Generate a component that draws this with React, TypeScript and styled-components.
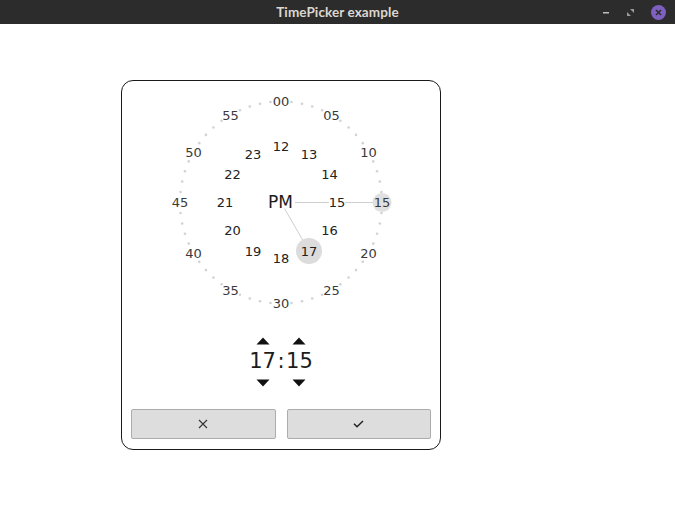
import React from "react";
import styled, { createGlobalStyle } from "styled-components";

const GlobalStyle = createGlobalStyle`
  html, body {
    margin: 0;
    padding: 0;
    background: #ffffff;
    font-family: "DejaVu Sans", "Liberation Sans", sans-serif;
  }
`;

const Window = styled.div`
  width: 675px;
  height: 506px;
  display: flex;
  flex-direction: column;
  background: #ffffff;
  overflow: hidden;
`;

const TitleBar = styled.div`
  height: 24px;
  flex: 0 0 24px;
  background: #2c2c2c;
  display: grid;
  grid-template-columns: 1fr auto 1fr;
  align-items: center;
`;

const Title = styled.div`
  grid-column: 2;
  color: #dcd8d0;
  font-family: "Lato", "Open Sans", sans-serif;
  font-weight: 700;
  font-size: 13.5px;
  letter-spacing: 0.1px;
`;

const Controls = styled.div`
  grid-column: 3;
  justify-self: end;
  display: flex;
  align-items: center;
  gap: 16px;
  padding-right: 9px;
`;

const CloseDot = styled.div`
  width: 15px;
  height: 15px;
  border-radius: 50%;
  background: #7d60bf;
  display: flex;
  align-items: center;
  justify-content: center;
`;

const Content = styled.div`
  flex: 1;
  padding: 56px 0 0 121px;
`;

const Card = styled.div`
  width: 320px;
  box-sizing: border-box;
  border: 1px solid #1a1a1a;
  border-radius: 12px;
  display: flex;
  flex-direction: column;
  background: #ffffff;
`;

const ClockSvg = styled.svg`
  display: block;
  width: 318px;
  height: 246px;
`;

const Spinner = styled.div`
  margin-top: 10px;
  display: flex;
  justify-content: center;
  align-items: flex-start;
  color: #1c1c1c;
`;

const SpinColumn = styled.div`
  display: flex;
  flex-direction: column;
  align-items: center;
`;

const ArrowBox = styled.svg<{ $down?: boolean }>`
  display: block;
  width: 14px;
  height: 8px;
  margin-top: ${(p) => (p.$down ? "6px" : "0")};
  margin-bottom: ${(p) => (p.$down ? "0" : "4px")};
`;

const SpinValue = styled.div`
  font-size: 21px;
  line-height: 24px;
  height: 24px;
`;

const Colon = styled.div`
  font-size: 21px;
  line-height: 24px;
  margin: 12px 1.5px 0;
`;

const ButtonRow = styled.div`
  margin-top: 22px;
  padding: 0 9px 10px;
  display: grid;
  grid-template-columns: 1fr 1fr;
  gap: 11px;
`;

const ActionButton = styled.button`
  height: 30px;
  box-sizing: border-box;
  background: #dddddd;
  border: 1px solid #acacac;
  border-radius: 2px;
  padding: 0;
  display: flex;
  align-items: center;
  justify-content: center;
`;

const CX = 159;
const CY = 121.5;
const R_MIN = 101;
const R_HOUR = 56;

const pos = (r: number, idx: number) => {
  const a = (idx * 30 * Math.PI) / 180;
  return { x: CX + r * Math.sin(a), y: CY - r * Math.cos(a) };
};

const pad2 = (n: number) => (n < 10 ? "0" + n : String(n));

const Arrow = ({ down }: { down?: boolean }) => (
  <ArrowBox $down={down} viewBox="0 0 14 8">
    {down ? (
      <polygon points="0.5,0.5 13.5,0.5 7,7.5" fill="#111" />
    ) : (
      <polygon points="0.5,7.5 13.5,7.5 7,0.5" fill="#111" />
    )}
  </ArrowBox>
);

const Clock = () => {
  const selectedHourIdx = 5; // 17
  const selectedMinIdx = 3; // 15
  const hourPos = pos(R_HOUR, selectedHourIdx);
  const minPos = pos(R_MIN, selectedMinIdx);

  const dots = [];
  for (let m = 0; m < 60; m++) {
    if (m % 5 === 0) continue;
    const a = (m * 6 * Math.PI) / 180;
    dots.push(
      <circle
        key={m}
        cx={CX + R_MIN * Math.sin(a)}
        cy={CY - R_MIN * Math.cos(a)}
        r={1.3}
        fill="#d2d2d2"
      />
    );
  }

  const labels: { text: string; x: number; y: number; color: string }[] = [];
  for (let i = 0; i < 12; i++) {
    const p = pos(R_MIN, i);
    labels.push({ text: pad2(i * 5), x: p.x, y: p.y, color: "#3a3a3a" });
  }
  for (let i = 0; i < 12; i++) {
    const p = pos(R_HOUR, i);
    labels.push({ text: String(12 + i), x: p.x, y: p.y, color: "#222" });
  }

  return (
    <ClockSvg viewBox="0 0 318 246">
      {dots}
      <line x1={CX} y1={CY} x2={minPos.x} y2={minPos.y} stroke="#cfcfcf" strokeWidth={1} />
      <line x1={CX} y1={CY} x2={hourPos.x} y2={hourPos.y} stroke="#cfcfcf" strokeWidth={1} />
      {labels.map((l, i) => (
        <rect key={"bg" + i} x={l.x - 8} y={l.y - 5} width={16} height={10} fill="#fff" />
      ))}
      <rect x={CX - 14} y={CY - 7} width={28} height={13} fill="#fff" />
      <circle cx={hourPos.x} cy={hourPos.y} r={13} fill="#dcdcdc" />
      <circle cx={minPos.x} cy={minPos.y} r={9.5} fill="#e0e0e0" />
      {labels.map((l, i) => (
        <text
          key={"t" + i}
          x={l.x}
          y={l.y + 4.7}
          textAnchor="middle"
          fontFamily="DejaVu Sans, sans-serif"
          fontSize={13}
          fill={l.color}
        >
          {l.text}
        </text>
      ))}
      <text
        x={CX - 0.5}
        y={CY + 5.8}
        textAnchor="middle"
        fontFamily="DejaVu Sans, sans-serif"
        fontSize={17}
        fill="#1c1c1c"
      >
        PM
      </text>
    </ClockSvg>
  );
};

export default function App() {
  return (
    <>
      <GlobalStyle />
      <Window>
        <TitleBar>
          <Title>TimePicker example</Title>
          <Controls>
            <svg width="8" height="8" viewBox="0 0 8 8">
              <rect x="1" y="4" width="6" height="1.5" fill="#bdbdbd" />
            </svg>
            <svg width="9" height="9" viewBox="0 0 9 9">
              <polygon points="4,1 8,1 8,5" fill="#9a9a9a" />
              <polygon points="1,4 1,8 5,8" fill="#9a9a9a" />
            </svg>
            <CloseDot>
              <svg width="7" height="7" viewBox="0 0 7 7">
                <path d="M1 1 L6 6 M6 1 L1 6" stroke="#2c2c2c" strokeWidth="1.6" />
              </svg>
            </CloseDot>
          </Controls>
        </TitleBar>
        <Content>
          <Card>
            <Clock />
            <Spinner>
              <SpinColumn>
                <Arrow />
                <SpinValue>17</SpinValue>
                <Arrow down />
              </SpinColumn>
              <Colon>:</Colon>
              <SpinColumn>
                <Arrow />
                <SpinValue>15</SpinValue>
                <Arrow down />
              </SpinColumn>
            </Spinner>
            <ButtonRow>
              <ActionButton aria-label="Cancel">
                <svg width="10" height="10" viewBox="0 0 10 10">
                  <path d="M1 1 L9 9 M9 1 L1 9" stroke="#333" strokeWidth="1.1" fill="none" />
                </svg>
              </ActionButton>
              <ActionButton aria-label="OK">
                <svg width="11" height="8" viewBox="0 0 11 8">
                  <path d="M1 3.8 L4 6.8 L10 1" stroke="#222" strokeWidth="1.5" fill="none" />
                </svg>
              </ActionButton>
            </ButtonRow>
          </Card>
        </Content>
      </Window>
    </>
  );
}
